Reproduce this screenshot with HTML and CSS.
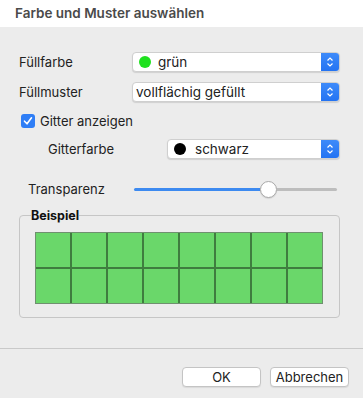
FILE: index.html
```html
<!DOCTYPE html>
<html lang="de">
<head>
  <meta charset="UTF-8" />
  <title>Farbe und Muster auswählen</title>
  <link rel="stylesheet" href="styles.css">
</head>
<body>

  <div class="titlebar">Farbe und Muster auswählen</div>

  <div class="form">
    <div class="row">
      <span class="label w113">Füllfarbe</span>
      <div class="popup w208">
        <span class="dot green"></span>
        <span class="value">grün</span>
        <span class="arrows">
          <svg width="8" height="12" viewBox="0 0 8 12"><path d="M1.5 4.5 L4 2 L6.5 4.5 M1.5 7.5 L4 10 L6.5 7.5" fill="none" stroke="#fff" stroke-width="1.2"/></svg>
        </span>
      </div>
    </div>

    <div class="row row2">
      <span class="label w113">Füllmuster</span>
      <div class="popup w208">
        <span class="value plain">vollflächig gefüllt</span>
        <span class="arrows">
          <svg width="8" height="12" viewBox="0 0 8 12"><path d="M1.5 4.5 L4 2 L6.5 4.5 M1.5 7.5 L4 10 L6.5 7.5" fill="none" stroke="#fff" stroke-width="1.2"/></svg>
        </span>
      </div>
    </div>

    <div class="row check-row">
      <span class="checkbox">
        <svg width="14" height="14" viewBox="0 0 14 14"><path d="M3.5 7.2 L6 9.8 L10.5 3.8" fill="none" stroke="#fff" stroke-width="1.6" stroke-linecap="round" stroke-linejoin="round"/></svg>
      </span>
      <span class="label">Gitter anzeigen</span>
    </div>

    <div class="row grid-color-row">
      <span class="label w119">Gitterfarbe</span>
      <div class="popup w173">
        <span class="dot black"></span>
        <span class="value">schwarz</span>
        <span class="arrows">
          <svg width="8" height="12" viewBox="0 0 8 12"><path d="M1.5 4.5 L4 2 L6.5 4.5 M1.5 7.5 L4 10 L6.5 7.5" fill="none" stroke="#fff" stroke-width="1.2"/></svg>
        </span>
      </div>
    </div>

    <div class="row slider-row">
      <span class="label w106">Transparenz</span>
      <div class="slider">
        <div class="track-fill"></div>
        <div class="knob"></div>
        <div class="track-rest"></div>
      </div>
    </div>

    <fieldset class="sample">
      <legend>Beispiel</legend>
      <div class="pattern">
        <div></div><div></div><div></div><div></div><div></div><div></div><div></div><div></div>
        <div></div><div></div><div></div><div></div><div></div><div></div><div></div><div></div>
      </div>
    </fieldset>
  </div>

  <div class="separator"></div>

  <div class="buttons">
    <button>OK</button>
    <button>Abbrechen</button>
  </div>

</body>
</html>
```

FILE: styles.css
```css
body {
  margin: 0;
  width: 363px;
  height: 398px;
  background: #ececec;
  font-family: Inter, "Liberation Sans", sans-serif;
  font-size: 13px;
  color: #222;
  overflow: hidden;
}

.titlebar {
  height: 27px;
  line-height: 27px;
  background: #fff;
  padding-left: 15px;
  font-weight: 600;
  font-size: 13.5px;
  color: #4a4a4a;
}

.form {
  padding: 25px 23px 0 19px;
}

.row {
  display: flex;
  align-items: center;
  height: 20px;
}

.row2 {
  margin-top: 10px;
}

.check-row {
  margin-top: 12px;
  height: 14px;
  padding-left: 2px;
}

.grid-color-row {
  margin-top: 11px;
  padding-left: 29px;
}

.slider-row {
  margin-top: 20px;
  padding-left: 9px;
}

.label {
  white-space: nowrap;
}

.w113 { width: 113px; }
.w119 { width: 119px; }
.w106 { width: 106px; }
.w208 { width: 208px; }
.w173 { width: 173px; }

.popup {
  height: 20px;
  box-sizing: border-box;
  background: #fff;
  border: 1px solid #cfcfcf;
  border-radius: 4px;
  box-shadow: 0 1px 1px rgba(0, 0, 0, 0.12);
  display: flex;
  align-items: center;
  overflow: hidden;
}

.dot {
  width: 12px;
  height: 12px;
  border-radius: 50%;
  margin-left: 6px;
  margin-right: 7px;
  flex: none;
}

.dot.green { background: #1fe11f; }
.dot.black { background: #000; margin-right: 9px; }

.value {
  flex: 1;
  font-size: 13.5px;
}

.value.plain {
  padding-left: 3px;
}

.arrows {
  width: 18px;
  height: 20px;
  background: linear-gradient(#3f8cfa, #2272f2);
  display: flex;
  align-items: center;
  justify-content: center;
  flex: none;
}

.checkbox {
  width: 14px;
  height: 14px;
  border-radius: 3px;
  background: #2f7ef6;
  display: flex;
  margin-right: 5px;
}

.slider {
  width: 203px;
  display: flex;
  align-items: center;
}

.track-fill {
  width: 126px;
  height: 3px;
  background: #3d8af0;
  border-radius: 2px 0 0 2px;
}

.knob {
  width: 17px;
  height: 17px;
  box-sizing: border-box;
  border-radius: 50%;
  background: #fff;
  border: 1px solid #a9a9a9;
  box-shadow: 0 1px 1px rgba(0, 0, 0, 0.1);
  flex: none;
}

.track-rest {
  flex: 1;
  height: 3px;
  background: #bdbdbd;
  border-radius: 0 2px 2px 0;
}

.sample {
  margin: 9px 0 0 0;
  width: 321px;
  height: 110px;
  box-sizing: border-box;
  border: 1px solid #c6c6c6;
  border-radius: 4px;
  padding: 0 0 0 15px;
  min-width: 0;
}

.sample legend {
  padding: 0;
  margin-left: -4px;
  font-weight: 700;
  font-size: 12.5px;
  color: #111;
}

.pattern {
  margin-top: 9px;
  width: 288px;
  height: 72px;
  box-sizing: border-box;
  display: grid;
  grid-template-columns: repeat(8, 1fr);
  grid-template-rows: repeat(2, 1fr);
  gap: 2px;
  background: #3f7d3f;
  border: 1px solid #6f906f;
}

.pattern div {
  background: #6ad76a;
}

.separator {
  margin-top: 30px;
  height: 1px;
  background: #c9c9c9;
}

.buttons {
  display: flex;
  justify-content: flex-end;
  gap: 9px;
  padding: 18px 14px 0 0;
}

button {
  width: 79px;
  height: 20px;
  background: #fff;
  border: 1px solid #c4c4c4;
  border-radius: 4px;
  box-shadow: 0 1px 1px rgba(0, 0, 0, 0.08);
  font-family: Inter, "Liberation Sans", sans-serif;
  font-size: 13px;
  color: #222;
  padding: 0;
}
```
